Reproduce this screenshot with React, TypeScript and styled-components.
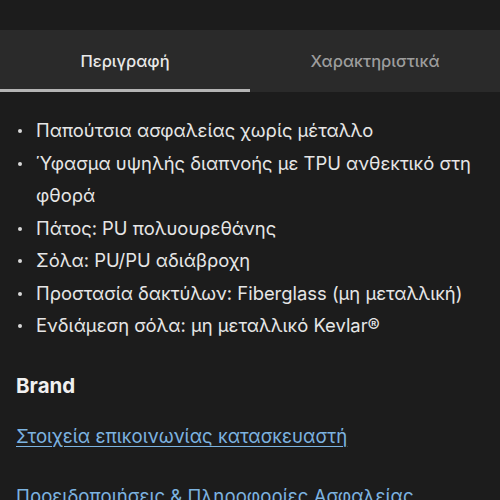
import styled, { createGlobalStyle } from 'styled-components'

const GlobalStyle = createGlobalStyle`
  html, body {
    margin: 0;
    padding: 0;
    background: #1c1c1c;
  }
  body {
    font-family: Inter, 'Noto Sans', sans-serif;
    color: #e8e8e8;
  }
`

const tabs = ['Περιγραφή', 'Χαρακτηριστικά']

const features = [
  'Παπούτσια ασφαλείας χωρίς μέταλλο',
  'Ύφασμα υψηλής διαπνοής με TPU ανθεκτικό στη φθορά',
  'Πάτος: PU πολυουρεθάνης',
  'Σόλα: PU/PU αδιάβροχη',
  'Προστασία δακτύλων: Fiberglass (μη μεταλλική)',
  'Ενδιάμεση σόλα: μη μεταλλικό Kevlar®',
]

const App = () => {
  return (
    <>
      <GlobalStyle />
      <Page>
        <TabBar>
          {tabs.map((t, i) => (
            <Tab key={t} active={i === 0}>
              {t}
            </Tab>
          ))}
        </TabBar>

        <Content>
          <FeatureList>
            {features.map((f) => (
              <FeatureItem key={f}>{f}</FeatureItem>
            ))}
          </FeatureList>

          <SectionTitle>Brand</SectionTitle>
          <LinkText href='#'>Στοιχεία επικοινωνίας κατασκευαστή</LinkText>
          <LinkText href='#'>Προειδοποιήσεις & Πληροφορίες Ασφαλείας</LinkText>
        </Content>
      </Page>
    </>
  )
}

const Page = styled.div`
  height: 500px;
  overflow: hidden;
  padding-top: 30px;
  box-sizing: border-box;
`

const TabBar = styled.div`
  display: grid;
  grid-template-columns: 1fr 1fr;
  background: #2a2a2a;
  height: 62px;
`

const Tab = styled.div<{ active?: boolean }>`
  display: flex;
  align-items: center;
  justify-content: center;
  font-size: 16.5px;
  font-weight: 500;
  color: ${(p) => (p.active ? '#e9e9e9' : '#9d9d9d')};
  border-bottom: 3px solid ${(p) => (p.active ? '#b4b4b4' : 'transparent')};
  padding-top: 3px;
`

const Content = styled.div`
  padding: 22px 16px 0 16px;
  display: flex;
  flex-direction: column;
`

const FeatureList = styled.ul`
  list-style: none;
  margin: 0;
  padding: 0;
`

const FeatureItem = styled.li`
  position: relative;
  padding-left: 20px;
  font-size: 18.4px;
  line-height: 32.5px;
  color: #e6e6e6;

  &::before {
    content: '';
    position: absolute;
    left: 2px;
    top: 15px;
    width: 4px;
    height: 4px;
    border-radius: 50%;
    background: #d8d8d8;
  }
`

const SectionTitle = styled.h3`
  margin: 31px 0 0 0;
  font-size: 20.5px;
  font-weight: 700;
  color: #f0f0f0;
`

const LinkText = styled.a`
  margin-top: 27px;
  font-size: 18.6px;
  color: #7cb3e0;
  text-decoration: underline;
  text-underline-offset: 3px;
  text-decoration-thickness: 1px;
  align-self: flex-start;

  & + & {
    margin-top: 38px;
  }
`

export default App
